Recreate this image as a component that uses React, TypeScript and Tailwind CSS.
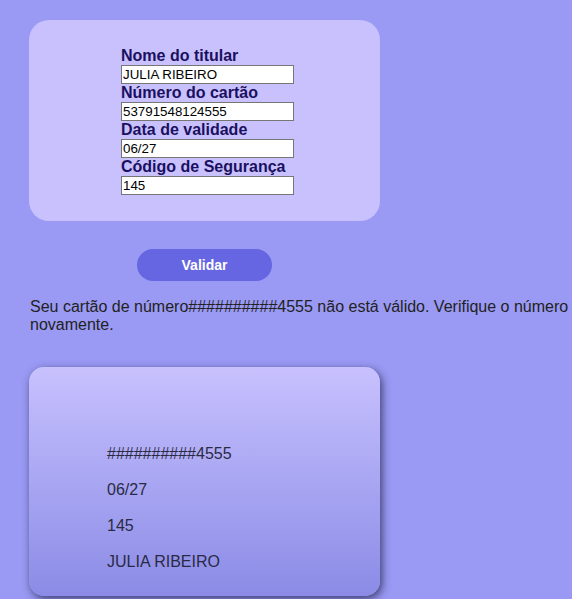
import { useState } from 'react';

const fields = [
  { label: 'Nome do titular', value: 'JULIA RIBEIRO' },
  { label: 'Número do cartão', value: '53791548124555' },
  { label: 'Data de validade', value: '06/27' },
  { label: 'Código de Segurança', value: '145' },
];

const App = () => {
  const [values, setValues] = useState(fields.map((f) => f.value));
  const masked = '##########' + values[1].slice(-4);
  const message = `Seu cartão de número${masked} não está válido. Verifique o número`;

  return (
    <div className="min-h-[599px] bg-[#9a9af4] pl-[29px] pt-5 pb-1 font-['Liberation_Sans',Arial,sans-serif]">
      <div className="w-[351px] h-[201px] rounded-[20px] bg-[#c8c1fe] pl-[92px] pt-[27px]">
        {fields.map((f, i) => (
          <div key={f.label} className="flex flex-col items-start">
            <label className="h-[18px] text-[16px] leading-[18px] font-bold text-[#1b1060]">
              {f.label}
            </label>
            <input
              className="w-[173px] h-[19px] bg-white border border-[#767676] px-[1px] text-[13.33px] leading-[15px] text-black outline-none"
              value={values[i]}
              onChange={(e) => {
                const next = [...values];
                next[i] = e.target.value;
                setValues(next);
              }}
            />
          </div>
        ))}
      </div>

      <button className="ml-[108px] mt-[28px] w-[135px] h-8 rounded-full bg-[#6666e2] text-white text-[14px] font-bold">
        Validar
      </button>

      <p className="mt-[17px] pl-px text-[16px] leading-[18px] text-[#222]">
        {message}
        <br />
        novamente.
      </p>

      <div className="mt-[33px] w-[351px] h-[229px] rounded-[15px] bg-gradient-to-b from-[#c8c1fe] to-[#8b8be6] shadow-[2px_3px_8px_rgba(30,30,70,0.75)] pl-[78px] pt-[78px] text-[16px] leading-[18px] text-[#2a2a44] flex flex-col gap-[18px]">
        <span>{masked}</span>
        <span>{values[2]}</span>
        <span>{values[3]}</span>
        <span>{values[0]}</span>
      </div>
    </div>
  );
};

export default App;
